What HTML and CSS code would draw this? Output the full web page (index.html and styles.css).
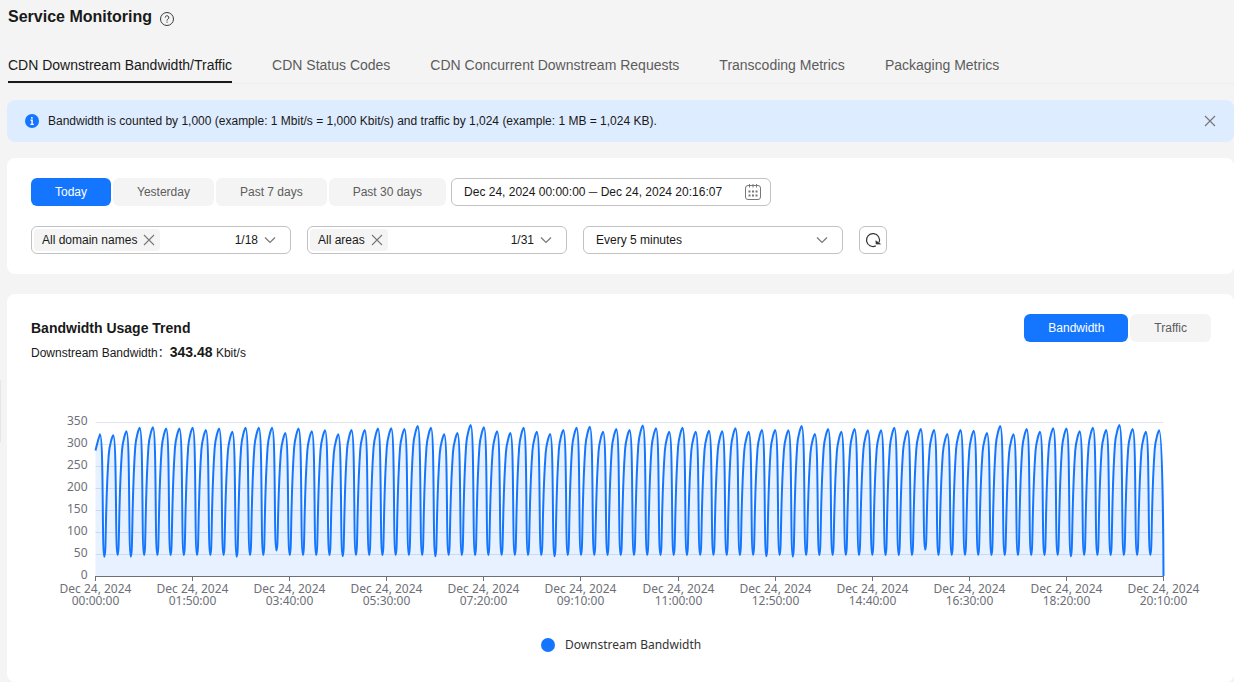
FILE: index.html
```html
<!DOCTYPE html>
<html lang="en">
<head>
<meta charset="utf-8">
<title>Service Monitoring</title>
<link rel="stylesheet" href="styles.css">
</head>
<body>
<div class="side-handle"></div>
<main class="page">
  <header class="page-header">
    <h1>Service Monitoring</h1>
    <button class="icon-button" type="button" aria-label="Help">
      <svg width="16" height="16" viewBox="0 0 16 16" fill="none" stroke="#3c3c3c"><circle cx="8" cy="8" r="6.5"/><path d="M6.2 6.6a1.8 1.8 0 1 1 2.7 1.5c-.6.4-.9.7-.9 1.3v.2"/><path d="M8 10.5v1.2"/></svg>
    </button>
  </header>

  <nav class="tabs">
    <a class="tab active" href="#bandwidth">CDN Downstream Bandwidth/Traffic</a>
    <a class="tab" href="#status">CDN Status Codes</a>
    <a class="tab" href="#requests">CDN Concurrent Downstream Requests</a>
    <a class="tab" href="#transcoding">Transcoding Metrics</a>
    <a class="tab" href="#packaging">Packaging Metrics</a>
  </nav>

  <div class="alert">
    <svg width="14" height="14" viewBox="0 0 14 14"><circle cx="7" cy="7" r="7" fill="#1476ff"/><path d="M6.9 3v1.8M5.6 6.2h1.5v4M5.4 10.4h3.4" fill="none" stroke="#fff" stroke-width="1.4"/></svg>
    <p>Bandwidth is counted by 1,000 (example: 1 Mbit/s = 1,000 Kbit/s) and traffic by 1,024 (example: 1 MB = 1,024 KB).</p>
    <button class="icon-button" type="button" aria-label="Close">
      <svg width="16" height="16" viewBox="0 0 16 16" fill="none" stroke="#777" stroke-width="1.2"><path d="M3 3l10 10M13 3L3 13"/></svg>
    </button>
  </div>

  <section class="card filters">
    <div class="filter-row">
      <div class="segments">
        <button class="segment selected" type="button">Today</button>
        <button class="segment" type="button">Yesterday</button>
        <button class="segment" type="button">Past 7 days</button>
        <button class="segment" type="button">Past 30 days</button>
      </div>
      <div class="field date-field">
        <input type="text" aria-label="Time range" value="Dec 24, 2024 00:00:00 ─ Dec 24, 2024 20:16:07">
        <button class="icon-button" type="button" aria-label="Open calendar">
          <svg width="16" height="16" viewBox="0 0 16 16" fill="none" stroke="#777"><rect x="0.5" y="1.5" width="15" height="14" rx="2.5"/><path d="M4.5 0v3.5M8 0v3.5M11.5 0v3.5"/><path d="M3.5 7.5h2M7 7.5h2M10.5 7.5h2M3.5 11.5h2M7 11.5h2M10.5 11.5h2" stroke-width="2"/></svg>
        </button>
      </div>
    </div>
    <div class="filter-row spaced">
      <div class="field multi">
        <span class="tag">All domain names
          <button class="icon-button" type="button" aria-label="Remove All domain names"><svg width="12" height="12" viewBox="0 0 12 12" fill="none" stroke="#777" stroke-width="1.1"><path d="M1 1l10 10M11 1L1 11"/></svg></button>
        </span>
        <button class="count" type="button" aria-label="Domain names, 1/18">1/18
          <svg width="12" height="12" viewBox="0 0 12 12" fill="none" stroke="#777" stroke-width="1.2"><path d="M1 3.5l5 5 5-5"/></svg>
        </button>
      </div>
      <div class="field multi">
        <span class="tag">All areas
          <button class="icon-button" type="button" aria-label="Remove All areas"><svg width="12" height="12" viewBox="0 0 12 12" fill="none" stroke="#777" stroke-width="1.1"><path d="M1 1l10 10M11 1L1 11"/></svg></button>
        </span>
        <button class="count" type="button" aria-label="Areas, 1/31">1/31
          <svg width="12" height="12" viewBox="0 0 12 12" fill="none" stroke="#777" stroke-width="1.2"><path d="M1 3.5l5 5 5-5"/></svg>
        </button>
      </div>
      <div class="field select-field">
        <select aria-label="Interval"><option>Every 5 minutes</option></select>
        <svg width="12" height="12" viewBox="0 0 12 12" fill="none" stroke="#777" stroke-width="1.2"><path d="M1 3.5l5 5 5-5"/></svg>
      </div>
      <button class="field refresh" type="button" aria-label="Refresh">
        <svg width="16" height="16" viewBox="0 0 16 16" fill="none" stroke="#333" stroke-width="1.2"><path d="M10.8 13.9A6.5 6.5 0 1 1 14 10.5"/><path d="M10.8 8.8l.3 3.3h4.4l-1.8-1.3z" fill="#333" stroke-width="0.6"/></svg>
      </button>
    </div>
  </section>

  <section class="card trend">
    <div class="trend-header">
      <div class="summary">
        <h2>Bandwidth Usage Trend</h2>
        <p>Downstream Bandwidth<span class="colon">：</span><strong>343.48</strong> Kbit/s</p>
      </div>
      <div class="segments">
        <button class="segment selected" type="button">Bandwidth</button>
        <button class="segment" type="button">Traffic</button>
      </div>
    </div>
    <svg class="chart" id="chart" role="img" aria-label="Downstream Bandwidth"></svg>
    <div class="legend"><span class="dot"></span>Downstream Bandwidth</div>
  </section>
</main>
<script src="chart.js"></script>
</body>
</html>
```
FILE: styles.css
```css
* { box-sizing: border-box; }
body {
  margin: 0;
  background: #f4f4f4;
  color: #191919;
  font: 12px/20px "Liberation Sans", Arial, sans-serif;
}
h1, h2, p { margin: 0; }
button, input, select { font: inherit; color: inherit; margin: 0; padding: 0; border: 0; background: none; outline: 0; }
button { cursor: pointer; }
svg { display: block; flex: none; }
.icon-button { display: flex; }
.side-handle {
  position: absolute;
  left: 0;
  top: 380px;
  width: 1px;
  height: 62px;
  background: #e6e6e6;
}
.page { padding-left: 7px; display: flex; flex-direction: column; min-height: 100vh; }
.page-header { display: flex; align-items: center; gap: 7px; padding: 5px 1px 0; }
h1 { font-size: 16px; line-height: 24px; }
.page-header .icon-button { padding-top: 3px; }
.tabs {
  display: flex;
  gap: 40px;
  margin: 24px 0 16px;
  padding-left: 1px;
  border-bottom: 1px solid #ededed;
  font-size: 14px;
  line-height: 24px;
}
.tab { color: #5c5c5c; text-decoration: none; padding-bottom: 4px; border-bottom: 2px solid transparent; white-space: nowrap; }
.tab.active { color: #191919; border-color: #191919; }
.alert {
  display: flex;
  align-items: center;
  gap: 9px;
  height: 42px;
  padding: 0 16px 0 18px;
  background: #deecff;
  border-radius: 8px;
}
.alert p { flex: 1; }
.card { background: #fff; border-radius: 8px; padding: 20px 24px; }
.filters { margin: 16px 0 20px; display: grid; gap: 20px; }
.filter-row { display: flex; gap: 5px; }
.filter-row.spaced { gap: 16px; }
.segments { display: flex; gap: 2px; }
.segment { height: 28px; padding: 0 24px; border-radius: 6px; background: #f4f4f4; color: #5c5c5c; }
.segment.selected { background: #1476ff; color: #fff; }
.field {
  display: flex;
  align-items: center;
  width: 260px;
  height: 28px;
  border: 1px solid #c2c2c2;
  border-radius: 6px;
  background: #fff;
}
.date-field { width: 320px; padding: 0 9px 0 12px; }
.date-field input { flex: 1; min-width: 0; }
.multi { justify-content: space-between; padding: 0 14px 0 2px; }
.tag { display: flex; align-items: center; gap: 6px; height: 22px; padding: 0 5px 0 8px; background: #f4f4f4; border-radius: 4px; }
.count { display: flex; align-items: center; gap: 6px; }
.select-field { display: grid; padding: 0 14px 0 12px; }
.select-field > * { grid-area: 1 / 1; }
.select-field select { appearance: none; width: 100%; }
.select-field svg { justify-self: end; pointer-events: none; }
.refresh { width: 28px; justify-content: center; }
.trend { flex: 1; padding-right: 23px; }
.trend-header { display: flex; justify-content: space-between; align-items: flex-start; }
h2 { font-size: 14px; line-height: 28px; }
.summary p { line-height: 20px; }
.colon { font-family: "Noto Sans CJK SC", sans-serif; line-height: 1; }
strong { font-size: 14px; }
.chart { width: 100%; height: 220px; margin-top: 37px; overflow: visible; }
.chart text { font: 12px "Noto Sans", sans-serif; fill: #6e7079; }
.legend {
  display: flex;
  align-items: center;
  justify-content: center;
  gap: 10px;
  margin-top: 15px;
  font: 12px/20px "Noto Sans", sans-serif;
  color: #333;
}
.dot { width: 14px; height: 14px; border-radius: 50%; background: #1476ff; }
```
FILE: chart.js
```javascript
const peaks = [
  322, 320, 329, 337, 338, 335, 335, 337, 332, 335, 328, 337, 337, 337, 325, 335,
  329, 331, 322, 332, 332, 335, 336, 334, 341, 337, 322, 325, 343, 338, 329, 325, 337,
  328, 323, 332, 337, 339, 328, 334, 332, 342, 336, 328, 337, 328, 330, 329, 336, 328,
  332, 332, 331, 341, 323, 334, 328, 334, 331, 331, 337, 330, 334, 332, 323, 332, 330,
  325, 341, 322, 334, 328, 336, 335, 329, 337, 332, 343, 334, 328, 331
];
const troughs = { 0: 44, 2: 44, 10: 44, 18: 45, 25: 45, 34: 45, 50: 45, 52: 44, 73: 45, 13: 58, 62: 60 };
const times = ["00:00", "01:50", "03:40", "05:30", "07:20", "09:10", "11:00", "12:50", "14:40", "16:30", "18:20", "20:10"];

const values = [];
peaks.forEach((peak, i) => {
  values.push(i ? peak - 44 : 285, peak, troughs[i] || 48);
});
values[values.length - 1] = 0;

const clamp = (v, a, b) => Math.min(Math.max(v, Math.min(a, b)), Math.max(a, b));

// Smooth curve whose control points stay inside each segment's bounding box.
function smoothPath(pts) {
  let d = `M${pts[0].join(" ")}`;
  let out = pts[0];
  for (let i = 1; i < pts.length; i++) {
    const p = pts[i - 1], c = pts[i], n = pts[i + 1];
    let into = c, next = c;
    if (n) {
      const a = Math.hypot(c[0] - p[0], c[1] - p[1]);
      const b = Math.hypot(n[0] - c[0], n[1] - c[1]);
      const r = b / (a + b);
      next = c.map((v, k) => clamp(v + (n[k] - p[k]) * 0.5 * r, n[k], v));
      into = c.map((v, k) => clamp(v - (next[k] - v) * a / b, p[k], v));
      next = c.map((v, k) => clamp(v + (v - into[k]) * b / a, n[k], v));
    }
    d += `C${[...out, ...into, ...c].map(v => v.toFixed(2)).join(" ")}`;
    out = next;
  }
  return d;
}

function draw() {
  const svg = document.getElementById("chart");
  const left = 64.5, right = svg.clientWidth - 47.5, top = 22, bottom = 176;
  const y = v => bottom - v * (bottom - top) / 350;
  const pts = values.map((v, i) => [left + i * (right - left) / (values.length - 1), y(v)]);
  const line = smoothPath(pts);
  let out = "";
  for (let v = 0; v <= 350; v += 50) {
    if (v) out += `<path d="M${left} ${y(v) + 0.5}H${right}" stroke="#e0e6f1"/>`;
    out += `<text x="${left - 8}" y="${y(v) + 3}" text-anchor="end">${v}</text>`;
  }
  out += `<path d="${line}L${right} ${bottom}H${left}Z" fill="#1476ff" fill-opacity="0.1"/>`;
  out += `<path d="M${left} ${bottom + 0.5}H${right}" stroke="#6e7079"/>`;
  out += `<path d="${line}" fill="none" stroke="#1476ff" stroke-width="2" stroke-linejoin="bevel"/>`;
  times.forEach((t, i) => {
    const x = Math.floor(left + i * (right - left) / (times.length - 1)) + 0.5;
    out += `<path d="M${x} ${bottom}v5" stroke="#6e7079"/>`;
    out += `<text text-anchor="middle"><tspan x="${x}" y="193">Dec 24, 2024</tspan><tspan x="${x}" dy="12">${t}:00</tspan></text>`;
  });
  svg.innerHTML = out;
}
draw();
addEventListener("resize", draw);
```
